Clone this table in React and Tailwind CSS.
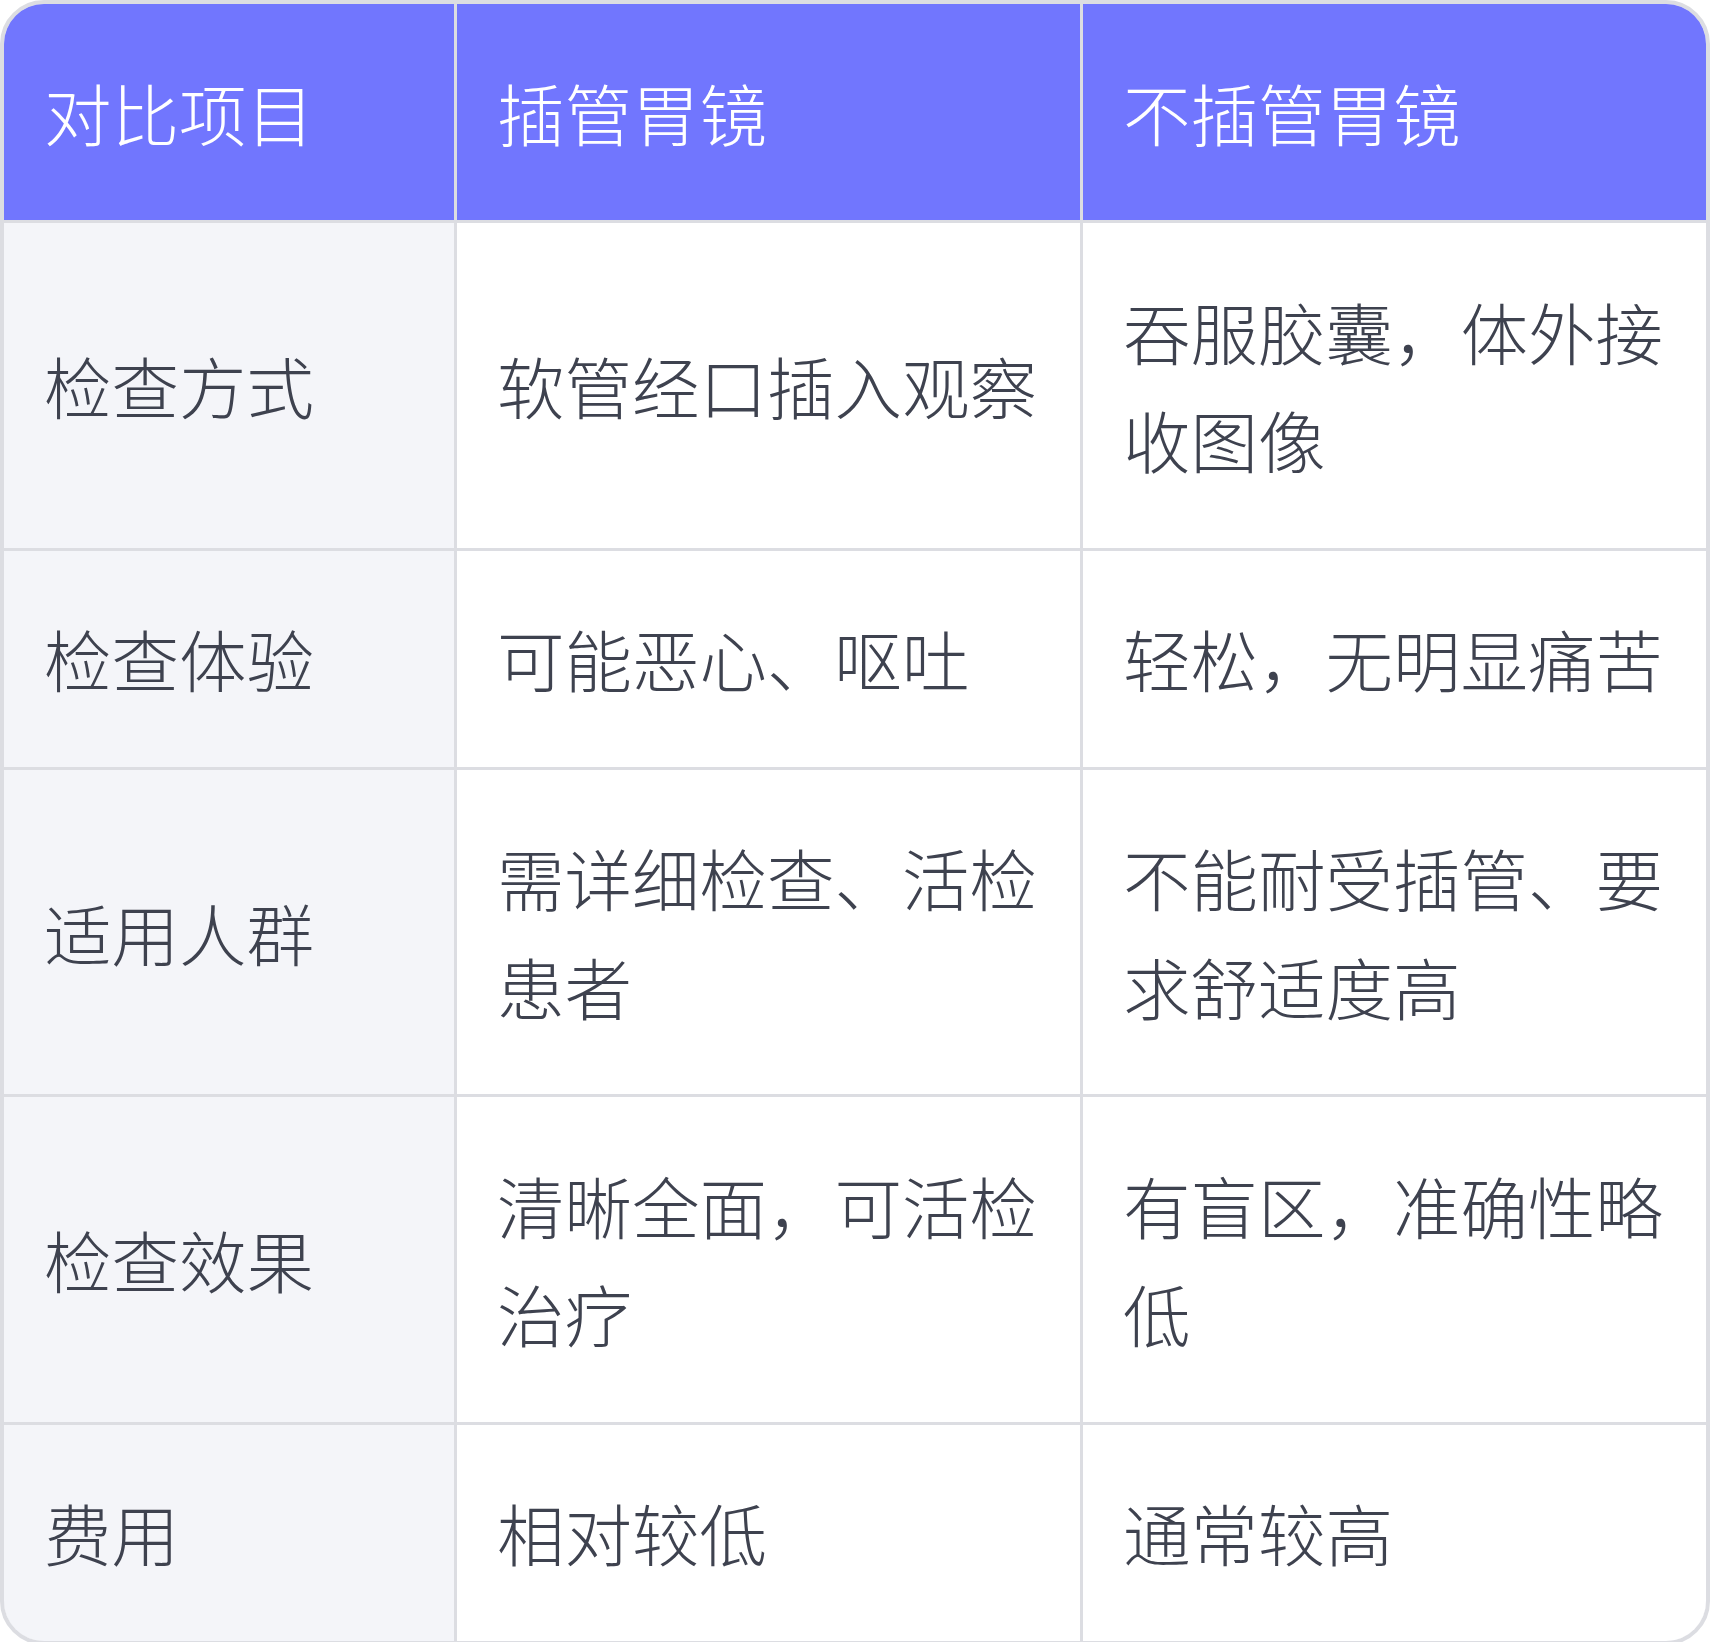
const rows = [
  { item: "检查方式", tube: "软管经口插入观察", capsule: "吞服胶囊，体外接收图像" },
  { item: "检查体验", tube: "可能恶心、呕吐", capsule: "轻松，无明显痛苦" },
  { item: "适用人群", tube: "需详细检查、活检患者", capsule: "不能耐受插管、要求舒适度高" },
  { item: "检查效果", tube: "清晰全面，可活检治疗", capsule: "有盲区，准确性略低" },
  { item: "费用", tube: "相对较低", capsule: "通常较高" },
];

const headers = ["对比项目", "插管胃镜", "不插管胃镜"];

export default function App() {
  return (
    <div
      className="w-[1710px] bg-white"
      style={{ fontFamily: '"Noto Sans CJK SC", "Noto Sans", sans-serif' }}
    >
      <div className="border-4 border-[#dcdde2] rounded-[44px] overflow-hidden">
        <div className="grid grid-cols-[450px_623px_1fr] gap-[3px] bg-[#dcdde2] text-[67.5px] leading-[108.5px] font-light">
          {/* Header */}
          {headers.map((h) => (
            <div key={h} className="bg-[#7176fe] text-white h-[216px] px-[40px] flex items-center">
              {h}
            </div>
          ))}

          {/* Body */}
          {rows.map((r) => (
            <div key={r.item} className="contents">
              <div className="bg-[#f4f5f9] text-[#3e424f] px-[40px] py-[53.75px] flex items-center">
                {r.item}
              </div>
              <div className="bg-white text-[#3e424f] px-[40px] py-[53.75px] flex items-center">
                <span>{r.tube}</span>
              </div>
              <div className="bg-white text-[#3e424f] px-[40px] py-[53.75px] flex items-center">
                <span>{r.capsule}</span>
              </div>
            </div>
          ))}
        </div>
      </div>
    </div>
  );
}
